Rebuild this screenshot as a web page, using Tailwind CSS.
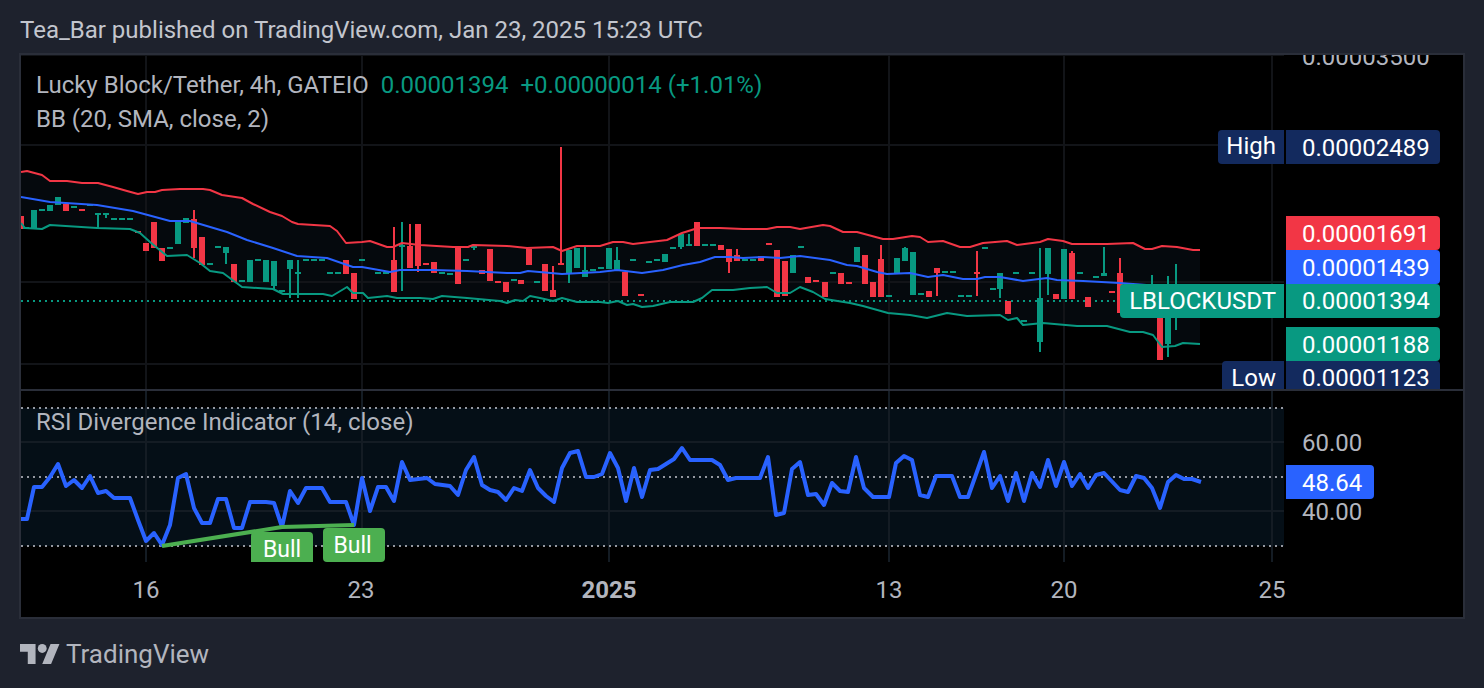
<!DOCTYPE html>
<html lang="en">
<head>
    <meta charset="UTF-8">
    <title>LBLOCKUSDT chart</title>
    <script src="https://cdn.jsdelivr.net/npm/@tailwindcss/browser@4"></script>
</head>
<body class="bg-[#1e222d] font-['Roboto',sans-serif] text-[24px] leading-[34px] text-[#b2b5be] w-[1484px] h-[688px] overflow-hidden">
    <!-- Header -->
    <div class="h-[53px] pl-5 pt-[6px] flex items-center text-[#c3c6ce]">Tea_Bar published on TradingView.com, Jan 23, 2025 15:23 UTC</div>

    <!-- Chart box -->
    <div class="ml-[19px] w-[1446px] h-[566px] border-2 border-[#2a2e39] bg-black flex flex-col">
        <!-- Main pane -->
        <div class="relative h-[334px] overflow-hidden">
            <svg id="main-plot" class="absolute left-0 top-0" width="1263" height="334" viewBox="21 55 1263 334" fill="none"></svg>

            <div class="absolute left-[15px] top-[13px] flex whitespace-nowrap">
                <span>Lucky Block/Tether, 4h, GATEIO</span>
                <span class="ml-3 text-[#089981]">0.00001394</span>
                <span class="ml-3 text-[#089981]">+0.00000014 (+1.01%)</span>
            </div>
            <div class="absolute left-[15px] top-[47px] whitespace-nowrap">BB (20, SMA, close, 2)</div>

            <!-- Price scale -->
            <div class="absolute left-[1281px] top-[-15px] whitespace-nowrap">0.00003500</div>

            <div class="absolute left-[1197px] top-[75px] w-[66px] h-[34px] leading-[32px] bg-[#132a5e] text-white rounded-l-[4px] pr-2 text-right">High</div>
            <div class="absolute left-[1265px] top-[75px] w-[154px] h-[34px] leading-[36px] bg-[#132a5e] text-white rounded-r-[4px] pl-4">0.00002489</div>
            <div class="absolute left-[1265px] top-[161px] w-[154px] h-[34px] leading-[36px] bg-[#f23645] text-white rounded-r-[4px] pl-4">0.00001691</div>
            <div class="absolute left-[1265px] top-[195px] w-[154px] h-[34px] leading-[36px] bg-[#2962ff] text-white rounded-r-[4px] pl-4">0.00001439</div>
            <div class="absolute left-[1099px] top-[229px] w-[164px] h-[34px] bg-[#089981] text-white rounded-l-[4px] pr-2 text-right">LBLOCKUSDT</div>
            <div class="absolute left-[1265px] top-[229px] w-[154px] h-[34px] bg-[#089981] text-white rounded-r-[4px] pl-4">0.00001394</div>
            <div class="absolute left-[1265px] top-[272px] w-[154px] h-[34px] leading-[36px] bg-[#089981] text-white rounded-r-[4px] pl-4">0.00001188</div>
            <div class="absolute left-[1201px] top-[306px] w-[62px] h-[34px] leading-[34px] bg-[#132a5e] text-white rounded-tl-[4px] pr-2 text-right">Low</div>
            <div class="absolute left-[1265px] top-[306px] w-[154px] h-[34px] leading-[34px] bg-[#132a5e] text-white rounded-tr-[4px] pl-4">0.00001123</div>
        </div>

        <div class="h-[2px] bg-[#2a2e39]"></div>

        <!-- RSI pane -->
        <div class="relative h-[171px] overflow-hidden">
            <svg id="rsi-plot" class="absolute left-0 top-0" width="1263" height="171" viewBox="21 391 1263 171" fill="none"></svg>

            <div class="absolute left-[15px] top-[14px] whitespace-nowrap">RSI Divergence Indicator (14, close)</div>

            <div class="absolute left-[230px] top-[141px] w-[62px] h-[34px] leading-[36px] bg-[#4caf50] text-white text-[23px] rounded-[4px] text-center">Bull</div>
            <div class="absolute left-[302px] top-[137px] w-[62px] h-[34px] leading-[36px] bg-[#4caf50] text-white text-[23px] rounded-[4px] pr-[3px] text-center">Bull</div>

            <div class="absolute left-[1281px] top-[35px]">60.00</div>
            <div class="absolute left-[1281px] top-[104px]">40.00</div>
            <div class="absolute left-[1265px] top-[74px] w-[88px] h-[34px] leading-[36px] bg-[#2962ff] text-white rounded-r-[4px] pl-4">48.64</div>
        </div>

        <!-- Time axis -->
        <div class="relative flex-1">
            <span class="absolute left-[125px] top-[11px] w-0 flex justify-center">16</span>
            <span class="absolute left-[340px] top-[11px] w-0 flex justify-center">23</span>
            <span class="absolute left-[588px] top-[11px] w-0 flex justify-center font-bold">2025</span>
            <span class="absolute left-[868px] top-[11px] w-0 flex justify-center">13</span>
            <span class="absolute left-[1043px] top-[11px] w-0 flex justify-center">20</span>
            <span class="absolute left-[1251px] top-[11px] w-0 flex justify-center">25</span>
        </div>
    </div>

    <!-- Footer -->
    <div class="h-[69px] pl-5 flex items-center gap-[6px] text-[#b2b5be]">
        <svg width="40" height="20" viewBox="0 4 36 18" fill="#b2b5be" preserveAspectRatio="none">
            <path d="M14 22H7V11H0V4h14v18zM28 22h-8l7.5-18h8L28 22z"></path>
            <circle cx="20" cy="8" r="4"></circle>
        </svg>
        <span class="text-[26px]">TradingView</span>
    </div>

    <script>
        const RED = "#f23645", GREEN = "#089981", BLUE = "#2962ff";

        // Bollinger bands, page coordinates
        const upper = [[21,172],[27,171],[42,175],[50,181],[67,181],[82,183],[98,183],[113,187],[127,191],[138,194],[147,192],[155,192],[162,190],[180,189],[203,189],[210,190],[222,195],[242,198],[253,204],[270,212],[282,216],[292,222],[298,224],[330,226],[337,231],[346,243],[362,242],[370,241],[387,247],[393,247],[402,243],[420,245],[453,247],[468,247],[473,245],[507,246],[527,248],[553,247],[562,251],[577,246],[600,246],[613,242],[623,242],[633,244],[667,240],[682,233],[698,228],[720,228],[743,229],[767,229],[777,227],[790,227],[800,229],[823,225],[830,226],[843,232],[857,232],[883,239],[893,239],[912,236],[920,237],[928,242],[943,241],[960,247],[970,247],[983,243],[1007,241],[1017,245],[1040,242],[1048,239],[1063,241],[1072,244],[1107,244],[1133,243],[1145,249],[1152,249],[1162,246],[1177,247],[1193,250],[1200,250]];
        const basis = [[21,197],[50,202],[97,205],[133,211],[170,221],[190,221],[227,232],[247,240],[273,248],[297,256],[327,258],[353,267],[362,267],[390,272],[400,270],[433,270],[467,271],[507,273],[520,273],[528,271],[562,274],[600,272],[617,270],[642,273],[663,270],[683,265],[700,262],[715,257],[730,257],[743,258],[763,257],[780,258],[800,256],[830,260],[847,265],[857,266],[877,272],[887,274],[910,273],[928,277],[943,275],[963,279],[977,279],[985,277],[1000,277],[1023,281],[1047,278],[1057,280],[1083,281],[1120,283],[1133,284],[1160,286]];
        const lower = [[21,223],[25,228],[42,229],[50,225],[97,228],[130,229],[140,233],[150,242],[167,256],[187,255],[200,263],[210,271],[223,273],[242,287],[273,289],[283,294],[323,294],[332,296],[347,287],[353,293],[363,293],[368,298],[387,296],[397,298],[420,298],[433,299],[442,296],[467,298],[500,301],[507,303],[515,300],[523,301],[530,296],[540,298],[553,301],[562,298],[577,302],[600,302],[608,303],[618,301],[627,305],[633,304],[642,307],[653,306],[670,302],[693,302],[702,298],[712,290],[733,290],[750,288],[767,287],[777,293],[790,293],[800,287],[813,292],[825,299],[850,303],[863,306],[888,313],[910,315],[927,318],[947,313],[967,316],[1000,315],[1008,320],[1017,318],[1023,325],[1043,323],[1077,326],[1107,326],[1130,332],[1143,332],[1153,335],[1162,347],[1175,346],[1183,343],[1200,344]];

        // Candles: x, colour, body top, body bottom, wick top, wick bottom
        const r = RED, g = GREEN;
        const candles = [
            [21,r,216,229],[26,g,227,229],[34,g,210,228],[42,g,209,211],[50,g,205,211],[58,g,197,205],[66,r,204,211],[74,g,206,208],[82,r,209,211],[90,g,204,206],
            [98,g,213,215,213,228],[106,g,213,215,213,218],[114,g,218,220],[122,g,218,220],[130,g,218,220],[138,r,231,233],[146,r,243,251],[154,r,222,248],[162,r,248,261],[170,g,247,249],
            [178,g,222,244],[186,g,218,223],[194,r,219,248,210,258],[202,r,237,265],[210,g,263,265],[218,g,246,248],[226,g,247,253,247,264],[234,r,264,282],[242,g,280,282],[250,g,260,282],
            [258,g,259,261],[266,g,260,282],[274,g,261,286,261,290],[282,g,290,292],[290,g,260,269,260,298],[298,g,272,274,260,298],[306,g,259,261],[314,g,259,261],[322,g,259,261],[330,g,272,274],
            [338,g,272,274],[346,r,260,274],[354,r,273,299],[362,g,259,261],[378,g,272,274],[386,g,272,274],[394,r,260,292,227,292],[402,g,245,247,222,291],[410,r,246,268,224,268],[418,r,224,266,224,272],
            [426,r,263,265],[434,r,262,273],[442,g,272,274],[450,g,273,275],[458,r,247,284],[466,g,259,261],[474,g,246,248,246,250],[482,r,270,274],[490,r,249,281],[498,r,281,283],
            [506,r,282,292],[514,g,279,281],[521,r,280,284],[529,r,249,265],[537,g,281,283],[545,r,264,291],[553,r,290,297,266,297],[561,r,263,265,147,265],[569,g,250,274,250,283],[577,g,248,268],
            [585,g,270,277,247,277],[593,g,269,271],[601,g,267,269],[609,g,248,269],[617,g,260,271,247,271],[625,r,272,296],[633,g,259,261],[641,r,294,296],[649,g,261,263],[657,g,259,261],
            [665,g,254,262],[673,g,247,249],[681,g,234,247,234,249],[689,g,244,246,234,246],[697,r,222,246],[705,g,244,246],[713,g,244,246],[721,r,245,250],[729,r,249,262,249,273],[737,r,255,261,249,261],
            [745,g,259,261],[753,g,259,261],[761,r,256,261],[769,r,243,245],[777,r,250,297],[785,r,261,296],[793,g,255,273],[801,g,246,248],[808,r,277,283],[816,r,280,282],
            [825,r,282,297],[833,g,272,274],[841,r,273,284],[849,r,282,284],[857,g,247,262],[865,r,255,284],[873,r,282,297],[881,r,259,297,245,297],[889,g,295,297],[897,g,258,274],
            [905,g,248,261,247,261],[913,g,252,295],[921,g,293,295],[929,r,291,297],[937,r,268,273,268,296],[945,g,271,273],[953,g,271,273],[961,g,295,297],[969,g,295,297],[977,r,272,274,251,296],
            [985,g,247,249],[993,g,288,290],[1000,g,273,289,273,298],[1008,r,301,314],[1016,g,272,274],[1024,g,320,322],[1032,g,272,274],[1040,g,298,342,248,352],[1048,g,248,274,248,295],[1056,r,294,299],
            [1064,g,249,299],[1072,r,253,299,251,299],[1080,g,272,274],[1088,r,297,307],[1096,g,276,278],[1104,g,273,276,247,276],[1112,r,291,293],[1120,r,273,313,258,313],[1152,g,304,306,275,306],[1160,r,317,360],
            [1168,g,318,344,276,357],[1176,g,300,302,264,330]
        ];

        // RSI line, page coordinates
        const rsi = [[21,519],[27,519],[34,487],[42,487],[50,477],[58,464],[66,486],[74,480],[82,488],[90,476],[98,493],[106,491],[114,498],[130,498],[138,520],[146,541],[154,533],[162,545],[170,525],[178,478],[186,474],[194,508],[202,523],[210,523],[218,499],[226,499],[234,528],[242,528],[250,502],[266,502],[274,503],[282,527],[290,491],[298,503],[306,488],[322,488],[330,502],[346,502],[354,525],[362,478],[370,511],[378,487],[386,487],[394,501],[402,462],[410,480],[427,478],[435,484],[450,486],[458,495],[466,470],[474,457],[482,485],[490,490],[498,492],[506,500],[514,488],[522,491],[530,470],[538,488],[546,496],[554,502],[562,468],[570,453],[578,451],[586,477],[594,477],[602,474],[610,453],[618,468],[626,501],[634,468],[642,497],[650,470],[658,469],[666,464],[674,459],[682,448],[690,460],[712,460],[720,465],[728,480],[736,478],[760,478],[768,457],[776,515],[784,513],[792,469],[800,462],[808,495],[816,494],[824,505],[832,483],[840,491],[848,492],[856,457],[864,488],[873,497],[889,497],[896,463],[904,456],[912,460],[920,495],[928,497],[936,476],[952,476],[960,497],[968,497],[984,452],[992,488],[1000,476],[1008,501],[1016,473],[1024,501],[1032,473],[1040,487],[1048,460],[1056,486],[1064,462],[1072,486],[1080,474],[1088,488],[1096,475],[1104,473],[1120,490],[1128,492],[1136,476],[1144,478],[1152,488],[1160,508],[1168,482],[1176,475],[1184,479],[1192,479],[1201,482]];

        const pts = a => a.map(p => p.join(",")).join(" ");
        const line = (x1, y1, x2, y2, stroke, w, dash) =>
            `<line x1="${x1}" y1="${y1}" x2="${x2}" y2="${y2}" stroke="${stroke}" stroke-width="${w}"${dash ? ` stroke-dasharray="${dash}"` : ""}/>`;
        const poly = (a, stroke, w) =>
            `<polyline points="${pts(a)}" stroke="${stroke}" stroke-width="${w}" stroke-linejoin="round"/>`;

        // Main pane
        let main = `<polygon points="${pts(upper)} ${pts([...lower].reverse())}" fill="#05090d"/>`;
        [55, 145, 282, 364].forEach(y => main += line(21, y, 1284, y, "#121418", 2));
        [146, 362, 609, 889, 1064, 1272].forEach(x => main += line(x, 55, x, 389, "#121418", 2));
        main += line(21, 301, 1120, 301, GREEN, 2, "2 4");
        candles.forEach(([x, c, t, b, wt, wb]) => {
            if (wt !== undefined) main += line(x, wt, x, wb, c, 2);
            main += `<rect x="${x - 3}" y="${t}" width="6" height="${b - t}" fill="${c}"/>`;
        });
        main += poly(upper, RED, 2) + poly(basis, BLUE, 2) + poly(lower, GREEN, 2);
        document.getElementById("main-plot").innerHTML = main;

        // RSI pane
        let sub = `<rect x="21" y="408" width="1263" height="138" fill="#050f17"/>`;
        [442, 511].forEach(y => sub += line(21, y, 1284, y, "#141c24", 2));
        [146, 362, 609, 889, 1064, 1272].forEach(x => sub += line(x, 391, x, 562, "#141c24", 2));
        [408, 477, 546].forEach(y => sub += line(21, y, 1284, y, "#9598a1", 2, "2 4"));
        sub += poly(rsi, BLUE, 4);
        sub += poly([[162,546],[282,527],[354,525]], "#4caf50", 4);
        document.getElementById("rsi-plot").innerHTML = sub;
    </script>
</body>
</html>
